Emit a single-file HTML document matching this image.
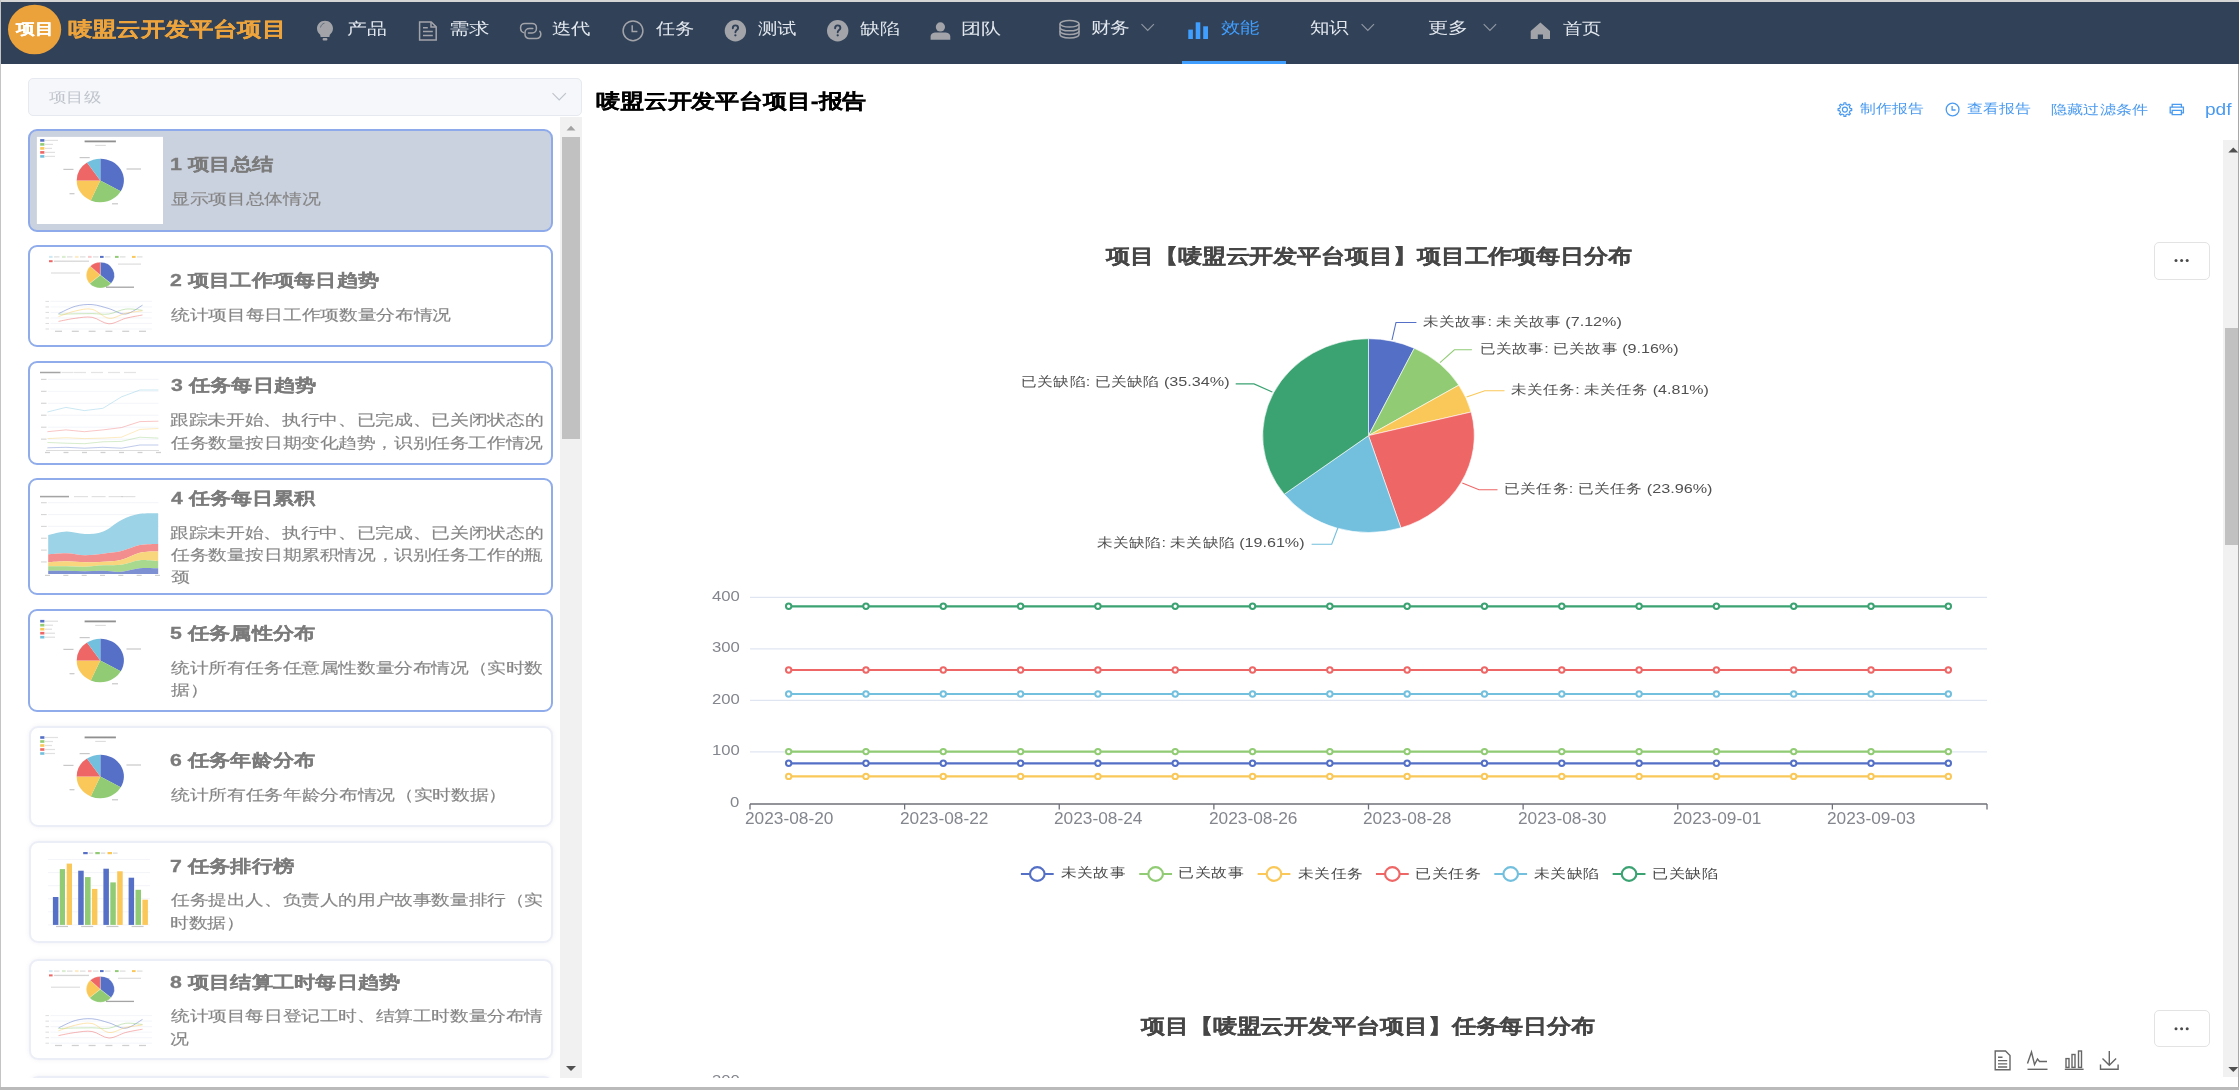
<!DOCTYPE html>
<html><head><meta charset="utf-8"><style>
html,body{margin:0;padding:0;}
body{width:2239px;height:1090px;overflow:hidden;position:relative;background:#fff;font-family:"Liberation Sans",sans-serif;}
.t{position:absolute;white-space:nowrap;transform-origin:0 0;font-size:100px;line-height:100px;}
svg.ov{position:absolute;left:0;top:0;z-index:2;}
</style></head><body>
<div style="position:absolute;left:0;top:0;width:2239px;height:2px;background:#d6d6d6"></div>
<div style="position:absolute;left:0;top:0;width:1px;height:1090px;background:#c4c4c4;z-index:6"></div>
<div style="position:absolute;left:2238px;top:63.5px;width:1px;height:1026px;background:#a8a8a8;z-index:6"></div>
<div style="position:absolute;left:0;top:1087px;width:2239px;height:3px;background:#bababa;z-index:6"></div>
<div style="position:absolute;left:1px;top:2px;width:2238px;height:61.5px;background:#314157"></div>
<div style="position:absolute;left:1182px;top:61px;width:103.5px;height:3px;background:#409eff"></div>
<div style="position:absolute;left:28px;top:77.5px;width:551.5px;height:36px;background:#f5f7fa;border:1px solid #e6e9ef;border-radius:5px"></div>
<div style="position:absolute;left:560px;top:117px;width:22px;height:961px;background:#f1f1f1"></div>
<div style="position:absolute;left:562px;top:136.8px;width:18px;height:302.5px;background:#c1c1c1"></div>
<div style="position:absolute;left:28px;top:128.6px;width:525px;height:103.1px;box-sizing:border-box;border:2.6px solid #8eaaea;border-radius:9px;background:#cbd2df"></div>
<div style="position:absolute;left:28px;top:244.8px;width:525px;height:102.69999999999999px;box-sizing:border-box;border:2.4px solid #90acea;border-radius:9px;background:#fff"></div>
<div style="position:absolute;left:28px;top:361.0px;width:525px;height:103.69999999999999px;box-sizing:border-box;border:2.4px solid #90acea;border-radius:9px;background:#fff"></div>
<div style="position:absolute;left:28px;top:478.4px;width:525px;height:117.0px;box-sizing:border-box;border:2.4px solid #90acea;border-radius:9px;background:#fff"></div>
<div style="position:absolute;left:28px;top:609.4px;width:525px;height:102.20000000000005px;box-sizing:border-box;border:2.4px solid #90acea;border-radius:9px;background:#fff"></div>
<div style="position:absolute;left:28.5px;top:725.7px;width:524.0px;height:101.5px;box-sizing:border-box;border:2px solid #eceef7;border-radius:9px;background:#fff;box-shadow:0 0 4px rgba(120,120,180,0.10)"></div>
<div style="position:absolute;left:28.5px;top:841.3px;width:524.0px;height:101.40000000000009px;box-sizing:border-box;border:2px solid #eceef7;border-radius:9px;background:#fff;box-shadow:0 0 4px rgba(120,120,180,0.10)"></div>
<div style="position:absolute;left:28.5px;top:959.0px;width:524.0px;height:101.0px;box-sizing:border-box;border:2px solid #eceef7;border-radius:9px;background:#fff;box-shadow:0 0 4px rgba(120,120,180,0.10)"></div>
<div style="position:absolute;left:28.5px;top:1075.5px;width:524.0px;height:104.5px;box-sizing:border-box;border:2px solid #eceef7;border-radius:9px;background:#fff;box-shadow:0 0 4px rgba(120,120,180,0.10)"></div>
<div style="position:absolute;left:1px;top:1078px;width:582px;height:9px;background:#fff;z-index:3"></div>
<div style="position:absolute;left:2223.4px;top:139.7px;width:14.6px;height:937.8px;background:#f1f1f1"></div>
<div style="position:absolute;left:2225.4px;top:328.3px;width:12.6px;height:217px;background:#c1c1c1"></div>
<div style="position:absolute;left:2153.5px;top:241.5px;width:56.19999999999982px;height:38.0px;box-sizing:border-box;border:1px solid #e3e3e3;border-radius:5px;background:#fff"></div>
<div style="position:absolute;left:2153.5px;top:1010.3px;width:56.19999999999982px;height:37.100000000000136px;box-sizing:border-box;border:1px solid #e3e3e3;border-radius:5px;background:#fff"></div>
<div style="position:absolute;left:600px;top:1078px;width:1620px;height:9px;background:#fff;z-index:3"></div>
<svg class="ov" width="2239" height="1090" viewBox="0 0 2239 1090">
<defs><filter id="bl" x="-5%" y="-5%" width="110%" height="110%"><feGaussianBlur stdDeviation="0.3"/></filter></defs>
<ellipse cx="34.6" cy="29.5" rx="26.6" ry="24.8" fill="#eca23b"/>
<g fill="#a2a4aa"><path d="M325 20.8 C320.4 20.8 317 24.3 317 28.6 C317 31.6 318.6 33.4 320.2 34.8 L320.6 37 L329.4 37 L329.8 34.8 C331.4 33.4 333 31.6 333 28.6 C333 24.3 329.6 20.8 325 20.8Z"/><rect x="322.6" y="38" width="4.8" height="2.6" rx="1"/></g>
<path d="M320.5 27.5 C321 25 322.5 23.6 324.5 23.2" stroke="#314157" stroke-width="0.9" fill="none" opacity="0.6"/>
<g fill="none" stroke="#a2a4aa" stroke-width="1.5"><path d="M419.6 21.9 H431.2 L436.2 26.9 V39.9 H419.6Z"/><path d="M431 22 V27 H436"/><path d="M423 27.8 H427.8 M423 31.6 H432.8 M423 35.4 H432.8"/></g>
<g fill="none" stroke="#a2a4aa" stroke-width="1.5" stroke-linecap="round"><path d="M523.6 32.6 A4.2 4.2 0 0 1 520.6 28.6 V27.6 A4.2 4.2 0 0 1 524.8 23.4 H532.2 A4.2 4.2 0 0 1 536.4 27.6 V28.8 A4.2 4.2 0 0 1 532.2 33 H528.4"/><path d="M539.8 31.2 A4.2 4.2 0 0 1 540.8 33.8 V34.4 A4.2 4.2 0 0 1 536.6 38.6 H529.2 A4.2 4.2 0 0 1 525 34.4 V32.7 A4.2 4.2 0 0 1 529.2 28.5 H532.8"/></g>
<g fill="none" stroke="#a2a4aa" stroke-width="1.5"><circle cx="633" cy="30.8" r="9.9"/><path d="M632.2 25.3 V31.6 H637.4"/></g>
<circle cx="735.4" cy="30.8" r="10.7" fill="#a2a4aa"/>
<path d="M732.8 28.2 C732.8 26.4 734.1 25.4 735.4 25.4 C737.0 25.4 738.1 26.5 738.1 27.9 C738.1 29.9 735.4 30.1 735.4 32.3" stroke="#314157" stroke-width="1.9" fill="none" stroke-linecap="round"/><circle cx="735.4" cy="35.3" r="1.15" fill="#314157"/>
<circle cx="837.7" cy="30.8" r="10.7" fill="#a2a4aa"/>
<path d="M835.1 28.2 C835.1 26.4 836.4000000000001 25.4 837.7 25.4 C839.3000000000001 25.4 840.4000000000001 26.5 840.4000000000001 27.9 C840.4000000000001 29.9 837.7 30.1 837.7 32.3" stroke="#314157" stroke-width="1.9" fill="none" stroke-linecap="round"/><circle cx="837.7" cy="35.3" r="1.15" fill="#314157"/>
<g fill="#a2a4aa"><circle cx="940.4" cy="26.9" r="4.6"/><path d="M930.6 39.7 V36.6 C930.6 33.6 933.2 32.4 936 32.4 H944.8 C947.6 32.4 950.3 33.6 950.3 36.6 V39.7Z"/></g>
<g fill="none" stroke="#a2a4aa" stroke-width="1.5"><ellipse cx="1069.5" cy="23.8" rx="9.5" ry="3.3"/><path d="M1060 23.8 V34.6 C1060 36.6 1064.2 38 1069.5 38 C1074.8 38 1079 36.6 1079 34.6 V23.8"/><path d="M1060 27.4 C1060 29.4 1064.2 30.8 1069.5 30.8 C1074.8 30.8 1079 29.4 1079 27.4"/><path d="M1060 31 C1060 33 1064.2 34.4 1069.5 34.4 C1074.8 34.4 1079 33 1079 31"/></g>
<path d="M1141.5 24.2 L1147.7 30.4 L1153.9 24.2" stroke="#8f96a3" stroke-width="1.2" fill="none"/>
<path d="M1361.6 24.2 L1367.8 30.4 L1374.0 24.2" stroke="#8f96a3" stroke-width="1.2" fill="none"/>
<path d="M1483.7 24.2 L1489.9 30.4 L1496.1000000000001 24.2" stroke="#8f96a3" stroke-width="1.2" fill="none"/>
<g fill="#409eff"><rect x="1188.3" y="29.6" width="4.6" height="9.4"/><rect x="1195.7" y="22.3" width="4.6" height="16.7"/><rect x="1203.2" y="26.3" width="4.8" height="12.7"/></g>
<path d="M1540.4 22.5 L1530.7 31 V39.1 H1537.8 V34.6 H1543 V39.1 H1550 V31Z" fill="#a2a4aa"/>
<path d="M552.5 93.2 L559.2 99.9 L565.9 93.2" stroke="#c0c4cc" stroke-width="1.2" fill="none"/>
<path d="M566.5 130.5 L571 125.8 L575.5 130.5Z" fill="#a3a3a3"/>
<path d="M566 1066 L571 1071 L576 1066Z" fill="#505050"/>
<g filter="url(#bl)"><rect x="36.9" y="136.90" width="126.1" height="87.1" fill="#fff"/><rect x="40.2" y="139.10" width="4.2" height="2.6" fill="#5470c6"/><rect x="45.00" y="139.80" width="13.00" height="1.2" fill="#777" opacity="0.22"/><rect x="40.2" y="143.10" width="4.2" height="2.6" fill="#91cc75"/><rect x="45.00" y="143.80" width="8.00" height="1.2" fill="#777" opacity="0.22"/><rect x="40.2" y="147.10" width="4.2" height="2.6" fill="#fac858"/><rect x="45.00" y="147.80" width="7.00" height="1.2" fill="#777" opacity="0.22"/><rect x="40.2" y="151.10" width="4.2" height="2.6" fill="#ee6666"/><rect x="45.00" y="151.80" width="10.00" height="1.2" fill="#777" opacity="0.22"/><rect x="40.2" y="155.10" width="4.2" height="2.6" fill="#73c0de"/><rect x="45.00" y="155.80" width="10.00" height="1.2" fill="#777" opacity="0.22"/><rect x="84.60" y="140.50" width="31.30" height="1.8" fill="#333" opacity="0.55"/><rect x="95.20" y="144.85" width="10.60" height="1.1" fill="#999" opacity="0.35"/><path d="M100.30 180.50 L100.30 158.70 A23.60 21.80 0 0 1 120.76 191.36Z" fill="#5470c6" stroke="#fff" stroke-width="0"/><path d="M100.30 180.50 L120.76 191.36 A23.60 21.80 0 0 1 90.71 200.42Z" fill="#91cc75" stroke="#fff" stroke-width="0"/><path d="M100.30 180.50 L90.71 200.42 A23.60 21.80 0 0 1 76.70 180.38Z" fill="#fac858" stroke="#fff" stroke-width="0"/><path d="M100.30 180.50 L76.70 180.38 A23.60 21.80 0 0 1 86.99 162.50Z" fill="#ee6666" stroke="#fff" stroke-width="0"/><path d="M100.30 180.50 L86.99 162.50 A23.60 21.80 0 0 1 100.30 158.70Z" fill="#73c0de" stroke="#fff" stroke-width="0"/><rect x="126.50" y="168.40" width="14.50" height="1.2" fill="#444" opacity="0.3"/><rect x="112.00" y="203.20" width="6.00" height="1.2" fill="#444" opacity="0.3"/><rect x="69.50" y="193.10" width="5.00" height="1.2" fill="#444" opacity="0.3"/><rect x="63.40" y="168.80" width="10.10" height="1.2" fill="#444" opacity="0.3"/><rect x="79.60" y="157.00" width="10.10" height="1.2" fill="#444" opacity="0.3"/></g>
<g filter="url(#bl)"><rect x="49" y="255.90" width="3.6" height="2" fill="#73c0de" opacity="0.35"/><rect x="54.00" y="256.30" width="5.50" height="1.2" fill="#777" opacity="0.25"/><rect x="62" y="255.90" width="3.6" height="2" fill="#91cc75" opacity="0.35"/><rect x="67.00" y="256.30" width="5.50" height="1.2" fill="#777" opacity="0.25"/><rect x="75" y="255.90" width="3.6" height="2" fill="#fac858" opacity="0.35"/><rect x="80.00" y="256.30" width="5.50" height="1.2" fill="#777" opacity="0.25"/><rect x="88" y="255.90" width="3.6" height="2" fill="#ee6666" opacity="0.35"/><rect x="93.00" y="256.30" width="5.50" height="1.2" fill="#777" opacity="0.25"/><rect x="100" y="255.90" width="3.6" height="2" fill="#5470c6" opacity="1"/><rect x="105.00" y="256.30" width="5.50" height="1.2" fill="#777" opacity="0.25"/><rect x="115" y="255.90" width="3.6" height="2" fill="#91cc75" opacity="1"/><rect x="120.00" y="256.30" width="5.50" height="1.2" fill="#777" opacity="0.25"/><rect x="132" y="255.90" width="3.6" height="2" fill="#fac858" opacity="1"/><rect x="137.00" y="256.30" width="5.50" height="1.2" fill="#777" opacity="0.25"/><rect x="49" y="260.20" width="3.6" height="2" fill="#ee6666"/><rect x="54.00" y="260.55" width="35.00" height="1.3" fill="#777" opacity="0.3"/><path d="M100.30 275.10 L100.30 262.20 A14.00 12.90 0 0 1 110.99 283.43Z" fill="#5470c6" stroke="#fff" stroke-width="0.2"/><path d="M100.30 275.10 L110.99 283.43 A14.00 12.90 0 0 1 89.61 283.43Z" fill="#91cc75" stroke="#fff" stroke-width="0.2"/><path d="M100.30 275.10 L89.61 283.43 A14.00 12.90 0 0 1 90.24 266.13Z" fill="#fac858" stroke="#fff" stroke-width="0.2"/><path d="M100.30 275.10 L90.24 266.13 A14.00 12.90 0 0 1 100.30 262.20Z" fill="#ee6666" stroke="#fff" stroke-width="0.2"/><rect x="118.00" y="263.50" width="23.00" height="1.2" fill="#777" opacity="0.25"/><rect x="51.00" y="272.40" width="29.00" height="1.2" fill="#777" opacity="0.25"/><rect x="106.00" y="286.55" width="28.00" height="1.3" fill="#333" opacity="0.45"/><rect x="45.50" y="300.90" width="3.50" height="1.0" fill="#777" opacity="0.25"/><rect x="45.50" y="306.42" width="3.50" height="1.0" fill="#777" opacity="0.25"/><rect x="45.50" y="311.94" width="3.50" height="1.0" fill="#777" opacity="0.25"/><rect x="45.50" y="317.46" width="3.50" height="1.0" fill="#777" opacity="0.25"/><rect x="45.50" y="322.98" width="3.50" height="1.0" fill="#777" opacity="0.25"/><rect x="45.50" y="328.50" width="3.50" height="1.0" fill="#777" opacity="0.25"/><line x1="50.5" x2="151.9" y1="301.40" y2="301.40" stroke="#e0e6f1" stroke-width="0.4"/><line x1="50.5" x2="151.9" y1="306.92" y2="306.92" stroke="#e0e6f1" stroke-width="0.4"/><line x1="50.5" x2="151.9" y1="312.44" y2="312.44" stroke="#e0e6f1" stroke-width="0.4"/><line x1="50.5" x2="151.9" y1="317.96" y2="317.96" stroke="#e0e6f1" stroke-width="0.4"/><line x1="50.5" x2="151.9" y1="323.48" y2="323.48" stroke="#e0e6f1" stroke-width="0.4"/><line x1="50.5" x2="151.9" y1="329.00" y2="329.00" stroke="#e0e6f1" stroke-width="0.4"/><path d="M58.50 313.70 C61.30 312.47 69.70 307.82 75.30 306.30 C80.90 304.78 86.50 304.22 92.10 304.60 C97.70 304.98 103.30 307.03 108.90 308.60 C114.50 310.17 120.10 314.57 125.70 314.00 C131.30 313.43 139.70 306.67 142.50 305.20" stroke="#5470c6" stroke-width="0.6" fill="none" opacity="0.8"/><path d="M58.50 314.30 C61.30 314.22 69.70 313.92 75.30 313.80 C80.90 313.68 86.50 313.57 92.10 313.60 C97.70 313.63 103.30 314.75 108.90 314.00 C114.50 313.25 120.10 309.72 125.70 309.10 C131.30 308.48 139.70 310.10 142.50 310.30" stroke="#91cc75" stroke-width="0.6" fill="none" opacity="0.8"/><path d="M58.50 316.60 C61.30 315.67 69.70 312.22 75.30 311.00 C80.90 309.78 86.50 308.08 92.10 309.30 C97.70 310.52 103.30 317.63 108.90 318.30 C114.50 318.97 120.10 314.55 125.70 313.30 C131.30 312.05 139.70 311.22 142.50 310.80" stroke="#fac858" stroke-width="0.6" fill="none" opacity="0.8"/><path d="M58.50 321.40 C61.30 320.88 69.70 318.98 75.30 318.30 C80.90 317.62 86.50 316.38 92.10 317.30 C97.70 318.22 103.30 323.63 108.90 323.80 C114.50 323.97 120.10 319.77 125.70 318.30 C131.30 316.83 139.70 315.55 142.50 315.00" stroke="#ee6666" stroke-width="0.6" fill="none" opacity="0.8"/><rect x="55.00" y="330.70" width="7.00" height="1.2" fill="#777" opacity="0.35"/><rect x="71.80" y="330.70" width="7.00" height="1.2" fill="#777" opacity="0.35"/><rect x="88.60" y="330.70" width="7.00" height="1.2" fill="#777" opacity="0.35"/><rect x="105.40" y="330.70" width="7.00" height="1.2" fill="#777" opacity="0.35"/><rect x="122.20" y="330.70" width="7.00" height="1.2" fill="#777" opacity="0.35"/><rect x="139.00" y="330.70" width="7.00" height="1.2" fill="#777" opacity="0.35"/></g>
<g filter="url(#bl)"><line x1="48" x2="158.5" y1="379.40" y2="379.40" stroke="#e0e6f1" stroke-width="0.4"/><line x1="48" x2="158.5" y1="391.35" y2="391.35" stroke="#e0e6f1" stroke-width="0.4"/><line x1="48" x2="158.5" y1="403.30" y2="403.30" stroke="#e0e6f1" stroke-width="0.4"/><line x1="48" x2="158.5" y1="415.25" y2="415.25" stroke="#e0e6f1" stroke-width="0.4"/><line x1="48" x2="158.5" y1="427.20" y2="427.20" stroke="#e0e6f1" stroke-width="0.4"/><line x1="48" x2="158.5" y1="439.15" y2="439.15" stroke="#e0e6f1" stroke-width="0.4"/><line x1="46" x2="159" y1="450.50" y2="450.50" stroke="#aaa" stroke-width="0.4"/><polyline points="47.40,412.00 65.90,407.40 84.40,410.60 102.90,408.30 121.40,396.90 139.90,390.00 158.40,390.00" stroke="#73c0de" stroke-width="0.5" fill="none" opacity="0.75"/><polyline points="47.40,431.70 65.90,429.90 84.40,431.70 102.90,429.90 121.40,427.60 139.90,421.60 158.40,421.20" stroke="#ee6666" stroke-width="0.5" fill="none" opacity="0.75"/><polyline points="47.40,438.60 65.90,437.70 84.40,438.60 102.90,438.10 121.40,437.20 139.90,429.40 158.40,428.50" stroke="#fac858" stroke-width="0.5" fill="none" opacity="0.75"/><polyline points="47.40,442.50 65.90,443.20 84.40,443.70 102.90,441.80 121.40,441.40 139.90,437.20 158.40,438.10" stroke="#91cc75" stroke-width="0.5" fill="none" opacity="0.75"/><polyline points="47.40,447.80 65.90,447.30 84.40,448.20 102.90,447.30 121.40,448.20 139.90,445.00 158.40,445.00" stroke="#5470c6" stroke-width="0.5" fill="none" opacity="0.75"/><rect x="40.00" y="371.75" width="20.50" height="1.5" fill="#333" opacity="0.45"/><rect x="61.50" y="371.90" width="12.00" height="1.2" fill="#777" opacity="0.2"/><rect x="74.00" y="371.90" width="12.00" height="1.2" fill="#777" opacity="0.2"/><rect x="91.00" y="371.90" width="12.00" height="1.2" fill="#777" opacity="0.2"/><rect x="108.00" y="371.90" width="12.00" height="1.2" fill="#777" opacity="0.2"/><rect x="124.00" y="371.90" width="12.00" height="1.2" fill="#777" opacity="0.2"/><rect x="45.00" y="451.90" width="5.00" height="1.2" fill="#777" opacity="0.35"/><rect x="63.50" y="451.90" width="5.00" height="1.2" fill="#777" opacity="0.35"/><rect x="82.00" y="451.90" width="5.00" height="1.2" fill="#777" opacity="0.35"/><rect x="100.50" y="451.90" width="5.00" height="1.2" fill="#777" opacity="0.35"/><rect x="119.00" y="451.90" width="5.00" height="1.2" fill="#777" opacity="0.35"/><rect x="137.50" y="451.90" width="5.00" height="1.2" fill="#777" opacity="0.35"/><rect x="156.00" y="451.90" width="5.00" height="1.2" fill="#777" opacity="0.35"/><rect x="41.00" y="378.80" width="5.50" height="1.2" fill="#777" opacity="0.3"/><rect x="41.00" y="390.75" width="5.50" height="1.2" fill="#777" opacity="0.3"/><rect x="41.00" y="402.70" width="5.50" height="1.2" fill="#777" opacity="0.3"/><rect x="41.00" y="414.65" width="5.50" height="1.2" fill="#777" opacity="0.3"/><rect x="41.00" y="426.60" width="5.50" height="1.2" fill="#777" opacity="0.3"/><rect x="41.00" y="438.55" width="5.50" height="1.2" fill="#777" opacity="0.3"/></g>
<g filter="url(#bl)"><line x1="48" x2="158.5" y1="502.70" y2="502.70" stroke="#e0e6f1" stroke-width="0.4"/><rect x="41.00" y="502.15" width="5.70" height="1.1" fill="#777" opacity="0.3"/><line x1="48" x2="158.5" y1="514.55" y2="514.55" stroke="#e0e6f1" stroke-width="0.4"/><rect x="41.00" y="514.00" width="5.70" height="1.1" fill="#777" opacity="0.3"/><line x1="48" x2="158.5" y1="526.40" y2="526.40" stroke="#e0e6f1" stroke-width="0.4"/><rect x="41.00" y="525.85" width="5.70" height="1.1" fill="#777" opacity="0.3"/><line x1="48" x2="158.5" y1="538.25" y2="538.25" stroke="#e0e6f1" stroke-width="0.4"/><rect x="41.00" y="537.70" width="5.70" height="1.1" fill="#777" opacity="0.3"/><line x1="48" x2="158.5" y1="550.10" y2="550.10" stroke="#e0e6f1" stroke-width="0.4"/><rect x="41.00" y="549.55" width="5.70" height="1.1" fill="#777" opacity="0.3"/><line x1="48" x2="158.5" y1="561.95" y2="561.95" stroke="#e0e6f1" stroke-width="0.4"/><rect x="41.00" y="561.40" width="5.70" height="1.1" fill="#777" opacity="0.3"/><path d="M48.20 535.00 C51.26 534.42 60.42 531.67 66.53 531.50 C72.64 531.33 78.75 534.00 84.86 534.00 C90.97 534.00 97.08 533.85 103.19 531.50 C109.30 529.15 115.41 522.85 121.52 519.90 C127.63 516.95 133.74 514.90 139.85 513.80 C145.96 512.70 155.12 513.38 158.18 513.30 L158.18 544.10 C155.12 544.27 145.96 543.93 139.85 545.10 C133.74 546.27 127.63 549.67 121.52 551.10 C115.41 552.53 109.30 553.02 103.19 553.70 C97.08 554.38 90.97 555.28 84.86 555.20 C78.75 555.12 72.64 553.37 66.53 553.20 C60.42 553.03 51.26 554.03 48.20 554.20Z" fill="#9dd3e6"/><path d="M48.20 554.20 C51.26 554.03 60.42 553.03 66.53 553.20 C72.64 553.37 78.75 555.12 84.86 555.20 C90.97 555.28 97.08 554.38 103.19 553.70 C109.30 553.02 115.41 552.53 121.52 551.10 C127.63 549.67 133.74 546.27 139.85 545.10 C145.96 543.93 155.12 544.27 158.18 544.10 L158.18 551.60 C155.12 551.78 145.96 551.35 139.85 552.70 C133.74 554.05 127.63 558.20 121.52 559.70 C115.41 561.20 109.30 561.28 103.19 561.70 C97.08 562.12 90.97 562.28 84.86 562.20 C78.75 562.12 72.64 561.20 66.53 561.20 C60.42 561.20 51.26 562.03 48.20 562.20Z" fill="#f28e8e"/><path d="M48.20 562.20 C51.26 562.03 60.42 561.20 66.53 561.20 C72.64 561.20 78.75 562.12 84.86 562.20 C90.97 562.28 97.08 562.12 103.19 561.70 C109.30 561.28 115.41 561.20 121.52 559.70 C127.63 558.20 133.74 554.05 139.85 552.70 C145.96 551.35 155.12 551.78 158.18 551.60 L158.18 561.20 C155.12 561.03 145.96 559.60 139.85 560.20 C133.74 560.80 127.63 563.95 121.52 564.80 C115.41 565.65 109.30 564.97 103.19 565.30 C97.08 565.63 90.97 566.63 84.86 566.80 C78.75 566.97 72.64 566.38 66.53 566.30 C60.42 566.22 51.26 566.30 48.20 566.30Z" fill="#f8d67e"/><path d="M48.20 566.30 C51.26 566.30 60.42 566.22 66.53 566.30 C72.64 566.38 78.75 566.97 84.86 566.80 C90.97 566.63 97.08 565.63 103.19 565.30 C109.30 564.97 115.41 565.65 121.52 564.80 C127.63 563.95 133.74 560.80 139.85 560.20 C145.96 559.60 155.12 561.03 158.18 561.20 L158.18 568.30 C155.12 568.30 145.96 567.72 139.85 568.30 C133.74 568.88 127.63 571.38 121.52 571.80 C115.41 572.22 109.30 570.88 103.19 570.80 C97.08 570.72 90.97 571.30 84.86 571.30 C78.75 571.30 72.64 570.88 66.53 570.80 C60.42 570.72 51.26 570.80 48.20 570.80Z" fill="#a8d98f"/><path d="M48.20 570.80 C51.26 570.80 60.42 570.72 66.53 570.80 C72.64 570.88 78.75 571.30 84.86 571.30 C90.97 571.30 97.08 570.72 103.19 570.80 C109.30 570.88 115.41 572.22 121.52 571.80 C127.63 571.38 133.74 568.88 139.85 568.30 C145.96 567.72 155.12 568.30 158.18 568.30 L158.18 573.90 C155.12 573.90 145.96 573.90 139.85 573.90 C133.74 573.90 127.63 573.90 121.52 573.90 C115.41 573.90 109.30 573.90 103.19 573.90 C97.08 573.90 90.97 573.90 84.86 573.90 C78.75 573.90 72.64 573.90 66.53 573.90 C60.42 573.90 51.26 573.90 48.20 573.90Z" fill="#7b90d2"/><rect x="40.00" y="495.85" width="29.00" height="1.5" fill="#333" opacity="0.45"/><rect x="74.00" y="496.00" width="14.00" height="1.2" fill="#777" opacity="0.22"/><rect x="91.60" y="496.00" width="14.00" height="1.2" fill="#777" opacity="0.22"/><rect x="108.70" y="496.00" width="14.00" height="1.2" fill="#777" opacity="0.22"/><rect x="121.40" y="496.00" width="14.00" height="1.2" fill="#777" opacity="0.22"/><rect x="45.00" y="574.80" width="5.00" height="1.2" fill="#777" opacity="0.35"/><rect x="63.33" y="574.80" width="5.00" height="1.2" fill="#777" opacity="0.35"/><rect x="81.66" y="574.80" width="5.00" height="1.2" fill="#777" opacity="0.35"/><rect x="99.99" y="574.80" width="5.00" height="1.2" fill="#777" opacity="0.35"/><rect x="118.32" y="574.80" width="5.00" height="1.2" fill="#777" opacity="0.35"/><rect x="136.65" y="574.80" width="5.00" height="1.2" fill="#777" opacity="0.35"/><rect x="154.98" y="574.80" width="5.00" height="1.2" fill="#777" opacity="0.35"/></g>
<g filter="url(#bl)"><rect x="40.2" y="619.90" width="4.2" height="2.6" fill="#5470c6"/><rect x="45.00" y="620.60" width="13.00" height="1.2" fill="#777" opacity="0.22"/><rect x="40.2" y="623.90" width="4.2" height="2.6" fill="#91cc75"/><rect x="45.00" y="624.60" width="8.00" height="1.2" fill="#777" opacity="0.22"/><rect x="40.2" y="627.90" width="4.2" height="2.6" fill="#fac858"/><rect x="45.00" y="628.60" width="7.00" height="1.2" fill="#777" opacity="0.22"/><rect x="40.2" y="631.90" width="4.2" height="2.6" fill="#ee6666"/><rect x="45.00" y="632.60" width="10.00" height="1.2" fill="#777" opacity="0.22"/><rect x="40.2" y="635.90" width="4.2" height="2.6" fill="#73c0de"/><rect x="45.00" y="636.60" width="10.00" height="1.2" fill="#777" opacity="0.22"/><rect x="84.60" y="620.50" width="31.30" height="1.8" fill="#333" opacity="0.55"/><rect x="95.20" y="624.85" width="10.60" height="1.1" fill="#999" opacity="0.35"/><path d="M100.30 660.50 L100.30 638.70 A23.60 21.80 0 0 1 120.76 671.36Z" fill="#5470c6" stroke="#fff" stroke-width="0"/><path d="M100.30 660.50 L120.76 671.36 A23.60 21.80 0 0 1 90.71 680.42Z" fill="#91cc75" stroke="#fff" stroke-width="0"/><path d="M100.30 660.50 L90.71 680.42 A23.60 21.80 0 0 1 76.70 660.38Z" fill="#fac858" stroke="#fff" stroke-width="0"/><path d="M100.30 660.50 L76.70 660.38 A23.60 21.80 0 0 1 86.99 642.50Z" fill="#ee6666" stroke="#fff" stroke-width="0"/><path d="M100.30 660.50 L86.99 642.50 A23.60 21.80 0 0 1 100.30 638.70Z" fill="#73c0de" stroke="#fff" stroke-width="0"/><rect x="126.50" y="648.40" width="14.50" height="1.2" fill="#444" opacity="0.3"/><rect x="112.00" y="683.20" width="6.00" height="1.2" fill="#444" opacity="0.3"/><rect x="69.50" y="673.10" width="5.00" height="1.2" fill="#444" opacity="0.3"/><rect x="63.40" y="648.80" width="10.10" height="1.2" fill="#444" opacity="0.3"/><rect x="79.60" y="637.00" width="10.10" height="1.2" fill="#444" opacity="0.3"/></g>
<g filter="url(#bl)"><rect x="40.2" y="736.20" width="4.2" height="2.6" fill="#5470c6"/><rect x="45.00" y="736.90" width="13.00" height="1.2" fill="#777" opacity="0.22"/><rect x="40.2" y="740.20" width="4.2" height="2.6" fill="#91cc75"/><rect x="45.00" y="740.90" width="8.00" height="1.2" fill="#777" opacity="0.22"/><rect x="40.2" y="744.20" width="4.2" height="2.6" fill="#fac858"/><rect x="45.00" y="744.90" width="7.00" height="1.2" fill="#777" opacity="0.22"/><rect x="40.2" y="748.20" width="4.2" height="2.6" fill="#ee6666"/><rect x="45.00" y="748.90" width="10.00" height="1.2" fill="#777" opacity="0.22"/><rect x="40.2" y="752.20" width="4.2" height="2.6" fill="#73c0de"/><rect x="45.00" y="752.90" width="10.00" height="1.2" fill="#777" opacity="0.22"/><rect x="84.60" y="736.50" width="31.30" height="1.8" fill="#333" opacity="0.55"/><rect x="95.20" y="740.85" width="10.60" height="1.1" fill="#999" opacity="0.35"/><path d="M100.30 776.50 L100.30 754.70 A23.60 21.80 0 0 1 120.76 787.36Z" fill="#5470c6" stroke="#fff" stroke-width="0"/><path d="M100.30 776.50 L120.76 787.36 A23.60 21.80 0 0 1 90.71 796.42Z" fill="#91cc75" stroke="#fff" stroke-width="0"/><path d="M100.30 776.50 L90.71 796.42 A23.60 21.80 0 0 1 76.70 776.38Z" fill="#fac858" stroke="#fff" stroke-width="0"/><path d="M100.30 776.50 L76.70 776.38 A23.60 21.80 0 0 1 86.99 758.50Z" fill="#ee6666" stroke="#fff" stroke-width="0"/><path d="M100.30 776.50 L86.99 758.50 A23.60 21.80 0 0 1 100.30 754.70Z" fill="#73c0de" stroke="#fff" stroke-width="0"/><rect x="126.50" y="764.40" width="14.50" height="1.2" fill="#444" opacity="0.3"/><rect x="112.00" y="799.20" width="6.00" height="1.2" fill="#444" opacity="0.3"/><rect x="69.50" y="789.10" width="5.00" height="1.2" fill="#444" opacity="0.3"/><rect x="63.40" y="764.80" width="10.10" height="1.2" fill="#444" opacity="0.3"/><rect x="79.60" y="753.00" width="10.10" height="1.2" fill="#444" opacity="0.3"/></g>
<g filter="url(#bl)"><line x1="48" x2="150" y1="859.50" y2="859.50" stroke="#e0e6f1" stroke-width="0.4"/><line x1="48" x2="150" y1="872.58" y2="872.58" stroke="#e0e6f1" stroke-width="0.4"/><line x1="48" x2="150" y1="885.66" y2="885.66" stroke="#e0e6f1" stroke-width="0.4"/><line x1="48" x2="150" y1="898.74" y2="898.74" stroke="#e0e6f1" stroke-width="0.4"/><line x1="48" x2="150" y1="911.82" y2="911.82" stroke="#e0e6f1" stroke-width="0.4"/><line x1="48" x2="150" y1="924.90" y2="924.90" stroke="#e0e6f1" stroke-width="0.4"/><rect x="52.9" y="897.00" width="5.50" height="27.90" fill="#5470c6"/><rect x="59.8" y="869.10" width="5.20" height="55.80" fill="#91cc75"/><rect x="66.7" y="863.60" width="5.30" height="61.30" fill="#fac858"/><rect x="78.2" y="870.70" width="5.50" height="54.20" fill="#5470c6"/><rect x="85" y="877.10" width="5.60" height="47.80" fill="#91cc75"/><rect x="91.9" y="888.90" width="5.50" height="36.00" fill="#fac858"/><rect x="103.4" y="868.70" width="5.50" height="56.20" fill="#5470c6"/><rect x="110.3" y="882.40" width="5.50" height="42.50" fill="#91cc75"/><rect x="117.2" y="871.30" width="5.50" height="53.60" fill="#fac858"/><rect x="128.6" y="877.70" width="5.50" height="47.20" fill="#5470c6"/><rect x="135.5" y="889.80" width="5.50" height="35.10" fill="#91cc75"/><rect x="142.4" y="899.70" width="5.50" height="25.20" fill="#fac858"/><rect x="83.2" y="852.00" width="4.5" height="2.2" fill="#5470c6"/><rect x="88.70" y="852.50" width="4.50" height="1.2" fill="#777" opacity="0.3"/><rect x="95.3" y="852.00" width="4.5" height="2.2" fill="#91cc75"/><rect x="100.80" y="852.50" width="4.50" height="1.2" fill="#777" opacity="0.3"/><rect x="107.5" y="852.00" width="4.5" height="2.2" fill="#fac858"/><rect x="113.00" y="852.50" width="4.50" height="1.2" fill="#777" opacity="0.3"/><rect x="56.00" y="925.90" width="12.00" height="1.2" fill="#777" opacity="0.4"/><rect x="81.20" y="925.90" width="12.00" height="1.2" fill="#777" opacity="0.4"/><rect x="106.40" y="925.90" width="12.00" height="1.2" fill="#777" opacity="0.4"/><rect x="131.60" y="925.90" width="12.00" height="1.2" fill="#777" opacity="0.4"/></g>
<g filter="url(#bl)"><rect x="49" y="970.10" width="3.6" height="2" fill="#73c0de" opacity="0.35"/><rect x="54.00" y="970.50" width="5.50" height="1.2" fill="#777" opacity="0.25"/><rect x="62" y="970.10" width="3.6" height="2" fill="#91cc75" opacity="0.35"/><rect x="67.00" y="970.50" width="5.50" height="1.2" fill="#777" opacity="0.25"/><rect x="75" y="970.10" width="3.6" height="2" fill="#fac858" opacity="0.35"/><rect x="80.00" y="970.50" width="5.50" height="1.2" fill="#777" opacity="0.25"/><rect x="88" y="970.10" width="3.6" height="2" fill="#ee6666" opacity="0.35"/><rect x="93.00" y="970.50" width="5.50" height="1.2" fill="#777" opacity="0.25"/><rect x="100" y="970.10" width="3.6" height="2" fill="#5470c6" opacity="1"/><rect x="105.00" y="970.50" width="5.50" height="1.2" fill="#777" opacity="0.25"/><rect x="115" y="970.10" width="3.6" height="2" fill="#91cc75" opacity="1"/><rect x="120.00" y="970.50" width="5.50" height="1.2" fill="#777" opacity="0.25"/><rect x="132" y="970.10" width="3.6" height="2" fill="#fac858" opacity="1"/><rect x="137.00" y="970.50" width="5.50" height="1.2" fill="#777" opacity="0.25"/><rect x="49" y="974.40" width="3.6" height="2" fill="#ee6666"/><rect x="54.00" y="974.75" width="35.00" height="1.3" fill="#777" opacity="0.3"/><path d="M100.30 989.30 L100.30 976.40 A14.00 12.90 0 0 1 110.99 997.63Z" fill="#5470c6" stroke="#fff" stroke-width="0.2"/><path d="M100.30 989.30 L110.99 997.63 A14.00 12.90 0 0 1 89.61 997.63Z" fill="#91cc75" stroke="#fff" stroke-width="0.2"/><path d="M100.30 989.30 L89.61 997.63 A14.00 12.90 0 0 1 90.24 980.33Z" fill="#fac858" stroke="#fff" stroke-width="0.2"/><path d="M100.30 989.30 L90.24 980.33 A14.00 12.90 0 0 1 100.30 976.40Z" fill="#ee6666" stroke="#fff" stroke-width="0.2"/><rect x="118.00" y="977.70" width="23.00" height="1.2" fill="#777" opacity="0.25"/><rect x="51.00" y="986.60" width="29.00" height="1.2" fill="#777" opacity="0.25"/><rect x="106.00" y="1000.75" width="28.00" height="1.3" fill="#333" opacity="0.45"/><rect x="45.50" y="1015.10" width="3.50" height="1.0" fill="#777" opacity="0.25"/><rect x="45.50" y="1020.62" width="3.50" height="1.0" fill="#777" opacity="0.25"/><rect x="45.50" y="1026.14" width="3.50" height="1.0" fill="#777" opacity="0.25"/><rect x="45.50" y="1031.66" width="3.50" height="1.0" fill="#777" opacity="0.25"/><rect x="45.50" y="1037.18" width="3.50" height="1.0" fill="#777" opacity="0.25"/><rect x="45.50" y="1042.70" width="3.50" height="1.0" fill="#777" opacity="0.25"/><line x1="50.5" x2="151.9" y1="1015.60" y2="1015.60" stroke="#e0e6f1" stroke-width="0.4"/><line x1="50.5" x2="151.9" y1="1021.12" y2="1021.12" stroke="#e0e6f1" stroke-width="0.4"/><line x1="50.5" x2="151.9" y1="1026.64" y2="1026.64" stroke="#e0e6f1" stroke-width="0.4"/><line x1="50.5" x2="151.9" y1="1032.16" y2="1032.16" stroke="#e0e6f1" stroke-width="0.4"/><line x1="50.5" x2="151.9" y1="1037.68" y2="1037.68" stroke="#e0e6f1" stroke-width="0.4"/><line x1="50.5" x2="151.9" y1="1043.20" y2="1043.20" stroke="#e0e6f1" stroke-width="0.4"/><path d="M58.50 1027.90 C61.30 1026.67 69.70 1022.02 75.30 1020.50 C80.90 1018.98 86.50 1018.42 92.10 1018.80 C97.70 1019.18 103.30 1021.23 108.90 1022.80 C114.50 1024.37 120.10 1028.77 125.70 1028.20 C131.30 1027.63 139.70 1020.87 142.50 1019.40" stroke="#5470c6" stroke-width="0.6" fill="none" opacity="0.8"/><path d="M58.50 1028.50 C61.30 1028.42 69.70 1028.12 75.30 1028.00 C80.90 1027.88 86.50 1027.77 92.10 1027.80 C97.70 1027.83 103.30 1028.95 108.90 1028.20 C114.50 1027.45 120.10 1023.92 125.70 1023.30 C131.30 1022.68 139.70 1024.30 142.50 1024.50" stroke="#91cc75" stroke-width="0.6" fill="none" opacity="0.8"/><path d="M58.50 1030.80 C61.30 1029.87 69.70 1026.42 75.30 1025.20 C80.90 1023.98 86.50 1022.28 92.10 1023.50 C97.70 1024.72 103.30 1031.83 108.90 1032.50 C114.50 1033.17 120.10 1028.75 125.70 1027.50 C131.30 1026.25 139.70 1025.42 142.50 1025.00" stroke="#fac858" stroke-width="0.6" fill="none" opacity="0.8"/><path d="M58.50 1035.60 C61.30 1035.08 69.70 1033.18 75.30 1032.50 C80.90 1031.82 86.50 1030.58 92.10 1031.50 C97.70 1032.42 103.30 1037.83 108.90 1038.00 C114.50 1038.17 120.10 1033.97 125.70 1032.50 C131.30 1031.03 139.70 1029.75 142.50 1029.20" stroke="#ee6666" stroke-width="0.6" fill="none" opacity="0.8"/><rect x="55.00" y="1044.90" width="7.00" height="1.2" fill="#777" opacity="0.35"/><rect x="71.80" y="1044.90" width="7.00" height="1.2" fill="#777" opacity="0.35"/><rect x="88.60" y="1044.90" width="7.00" height="1.2" fill="#777" opacity="0.35"/><rect x="105.40" y="1044.90" width="7.00" height="1.2" fill="#777" opacity="0.35"/><rect x="122.20" y="1044.90" width="7.00" height="1.2" fill="#777" opacity="0.35"/><rect x="139.00" y="1044.90" width="7.00" height="1.2" fill="#777" opacity="0.35"/></g>
<g fill="none" stroke="#4a9af0" stroke-width="1.2" stroke-linejoin="round"><path d="M1843.89 104.40 L1843.94 102.77 L1845.86 102.77 L1845.91 104.40 L1847.86 105.21 L1849.05 104.09 L1850.41 105.45 L1849.29 106.64 L1850.10 108.59 L1851.73 108.64 L1851.73 110.56 L1850.10 110.61 L1849.29 112.56 L1850.41 113.75 L1849.05 115.11 L1847.86 113.99 L1845.91 114.80 L1845.86 116.43 L1843.94 116.43 L1843.89 114.80 L1841.94 113.99 L1840.75 115.11 L1839.39 113.75 L1840.51 112.56 L1839.70 110.61 L1838.07 110.56 L1838.07 108.64 L1839.70 108.59 L1840.51 106.64 L1839.39 105.45 L1840.75 104.09 L1841.94 105.21Z"/><circle cx="1844.9" cy="109.6" r="2.5"/></g>
<g fill="none" stroke="#4a9af0" stroke-width="1.3"><circle cx="1952.6" cy="109.5" r="6.4"/><path d="M1952.1 105.9 V110 H1955.6"/></g>
<g fill="none" stroke="#4a9af0" stroke-width="1.3"><path d="M2172.2 107.2 V104.4 H2181.4 V107.2"/><path d="M2172.2 112.8 H2170.2 V107.2 H2183.4 V112.8 H2181.4"/><path d="M2172.2 110.4 H2181.4 V114.6 H2172.2Z"/></g>
<path d="M2228.3 152.4 L2233.3 147.4 L2238.3 152.4Z" fill="#505050"/>
<path d="M2228.3 1067 L2233.3 1072 L2238.3 1067Z" fill="#505050"/>
<circle cx="2176.0" cy="260.50" r="1.5" fill="#4a4a4a"/>
<circle cx="2181.6" cy="260.50" r="1.5" fill="#4a4a4a"/>
<circle cx="2187.2" cy="260.50" r="1.5" fill="#4a4a4a"/>
<circle cx="2176.0" cy="1028.85" r="1.5" fill="#4a4a4a"/>
<circle cx="2181.6" cy="1028.85" r="1.5" fill="#4a4a4a"/>
<circle cx="2187.2" cy="1028.85" r="1.5" fill="#4a4a4a"/>
<path d="M1368.50 435.60 L1368.50 338.70 A105.80 96.90 0 0 1 1414.27 348.24Z" fill="#5470c6" stroke="#fff" stroke-width="0.6"/><path d="M1368.50 435.60 L1414.27 348.24 A105.80 96.90 0 0 1 1458.81 385.13Z" fill="#91cc75" stroke="#fff" stroke-width="0.6"/><path d="M1368.50 435.60 L1458.81 385.13 A105.80 96.90 0 0 1 1471.12 412.03Z" fill="#fac858" stroke="#fff" stroke-width="0.6"/><path d="M1368.50 435.60 L1471.12 412.03 A105.80 96.90 0 0 1 1400.88 527.85Z" fill="#ee6666" stroke="#fff" stroke-width="0.6"/><path d="M1368.50 435.60 L1400.88 527.85 A105.80 96.90 0 0 1 1284.25 494.22Z" fill="#73c0de" stroke="#fff" stroke-width="0.6"/><path d="M1368.50 435.60 L1284.25 494.22 A105.80 96.90 0 0 1 1368.50 338.70Z" fill="#3ba272" stroke="#fff" stroke-width="0.6"/>
<polyline points="1392,340 1396,322.5 1416.4,322.5" stroke="#5470c6" stroke-width="1.1" fill="none"/>
<polyline points="1440,362.7 1454.4,349.8 1471.9,349.8" stroke="#91cc75" stroke-width="1.1" fill="none"/>
<polyline points="1466.6,396.9 1484.8,390.8 1504.5,390.8" stroke="#fac858" stroke-width="1.1" fill="none"/>
<polyline points="1462.3,483 1479,489.7 1497.5,489.7" stroke="#ee6666" stroke-width="1.1" fill="none"/>
<polyline points="1338.4,526.5 1331.7,544.3 1311.6,544.3" stroke="#73c0de" stroke-width="1.1" fill="none"/>
<polyline points="1272.4,392.1 1254,383.9 1235.7,383.9" stroke="#3ba272" stroke-width="1.1" fill="none"/>
<line x1="750.0" x2="1987.0" y1="597.4" y2="597.4" stroke="#e0e6f1" stroke-width="1.2"/>
<line x1="750.0" x2="1987.0" y1="648.9" y2="648.9" stroke="#e0e6f1" stroke-width="1.2"/>
<line x1="750.0" x2="1987.0" y1="700.4" y2="700.4" stroke="#e0e6f1" stroke-width="1.2"/>
<line x1="750.0" x2="1987.0" y1="751.9" y2="751.9" stroke="#e0e6f1" stroke-width="1.2"/>
<line x1="750.0" x2="1987.0" y1="804" y2="804" stroke="#6e7079" stroke-width="1.4"/>
<line x1="750.00" x2="750.00" y1="804" y2="809.5" stroke="#6e7079" stroke-width="1.3"/>
<line x1="904.62" x2="904.62" y1="804" y2="809.5" stroke="#6e7079" stroke-width="1.3"/>
<line x1="1059.25" x2="1059.25" y1="804" y2="809.5" stroke="#6e7079" stroke-width="1.3"/>
<line x1="1213.88" x2="1213.88" y1="804" y2="809.5" stroke="#6e7079" stroke-width="1.3"/>
<line x1="1368.50" x2="1368.50" y1="804" y2="809.5" stroke="#6e7079" stroke-width="1.3"/>
<line x1="1523.12" x2="1523.12" y1="804" y2="809.5" stroke="#6e7079" stroke-width="1.3"/>
<line x1="1677.75" x2="1677.75" y1="804" y2="809.5" stroke="#6e7079" stroke-width="1.3"/>
<line x1="1832.38" x2="1832.38" y1="804" y2="809.5" stroke="#6e7079" stroke-width="1.3"/>
<line x1="1987.00" x2="1987.00" y1="804" y2="809.5" stroke="#6e7079" stroke-width="1.3"/>
<line x1="788.66" x2="1948.34" y1="763.3" y2="763.3" stroke="#5470c6" stroke-width="2.2"/>
<circle cx="788.66" cy="763.3" r="2.7" fill="#fff" stroke="#5470c6" stroke-width="2.0"/>
<circle cx="865.97" cy="763.3" r="2.7" fill="#fff" stroke="#5470c6" stroke-width="2.0"/>
<circle cx="943.28" cy="763.3" r="2.7" fill="#fff" stroke="#5470c6" stroke-width="2.0"/>
<circle cx="1020.59" cy="763.3" r="2.7" fill="#fff" stroke="#5470c6" stroke-width="2.0"/>
<circle cx="1097.91" cy="763.3" r="2.7" fill="#fff" stroke="#5470c6" stroke-width="2.0"/>
<circle cx="1175.22" cy="763.3" r="2.7" fill="#fff" stroke="#5470c6" stroke-width="2.0"/>
<circle cx="1252.53" cy="763.3" r="2.7" fill="#fff" stroke="#5470c6" stroke-width="2.0"/>
<circle cx="1329.84" cy="763.3" r="2.7" fill="#fff" stroke="#5470c6" stroke-width="2.0"/>
<circle cx="1407.16" cy="763.3" r="2.7" fill="#fff" stroke="#5470c6" stroke-width="2.0"/>
<circle cx="1484.47" cy="763.3" r="2.7" fill="#fff" stroke="#5470c6" stroke-width="2.0"/>
<circle cx="1561.78" cy="763.3" r="2.7" fill="#fff" stroke="#5470c6" stroke-width="2.0"/>
<circle cx="1639.09" cy="763.3" r="2.7" fill="#fff" stroke="#5470c6" stroke-width="2.0"/>
<circle cx="1716.41" cy="763.3" r="2.7" fill="#fff" stroke="#5470c6" stroke-width="2.0"/>
<circle cx="1793.72" cy="763.3" r="2.7" fill="#fff" stroke="#5470c6" stroke-width="2.0"/>
<circle cx="1871.03" cy="763.3" r="2.7" fill="#fff" stroke="#5470c6" stroke-width="2.0"/>
<circle cx="1948.34" cy="763.3" r="2.7" fill="#fff" stroke="#5470c6" stroke-width="2.0"/>
<line x1="788.66" x2="1948.34" y1="751.6" y2="751.6" stroke="#91cc75" stroke-width="2.2"/>
<circle cx="788.66" cy="751.6" r="2.7" fill="#fff" stroke="#91cc75" stroke-width="2.0"/>
<circle cx="865.97" cy="751.6" r="2.7" fill="#fff" stroke="#91cc75" stroke-width="2.0"/>
<circle cx="943.28" cy="751.6" r="2.7" fill="#fff" stroke="#91cc75" stroke-width="2.0"/>
<circle cx="1020.59" cy="751.6" r="2.7" fill="#fff" stroke="#91cc75" stroke-width="2.0"/>
<circle cx="1097.91" cy="751.6" r="2.7" fill="#fff" stroke="#91cc75" stroke-width="2.0"/>
<circle cx="1175.22" cy="751.6" r="2.7" fill="#fff" stroke="#91cc75" stroke-width="2.0"/>
<circle cx="1252.53" cy="751.6" r="2.7" fill="#fff" stroke="#91cc75" stroke-width="2.0"/>
<circle cx="1329.84" cy="751.6" r="2.7" fill="#fff" stroke="#91cc75" stroke-width="2.0"/>
<circle cx="1407.16" cy="751.6" r="2.7" fill="#fff" stroke="#91cc75" stroke-width="2.0"/>
<circle cx="1484.47" cy="751.6" r="2.7" fill="#fff" stroke="#91cc75" stroke-width="2.0"/>
<circle cx="1561.78" cy="751.6" r="2.7" fill="#fff" stroke="#91cc75" stroke-width="2.0"/>
<circle cx="1639.09" cy="751.6" r="2.7" fill="#fff" stroke="#91cc75" stroke-width="2.0"/>
<circle cx="1716.41" cy="751.6" r="2.7" fill="#fff" stroke="#91cc75" stroke-width="2.0"/>
<circle cx="1793.72" cy="751.6" r="2.7" fill="#fff" stroke="#91cc75" stroke-width="2.0"/>
<circle cx="1871.03" cy="751.6" r="2.7" fill="#fff" stroke="#91cc75" stroke-width="2.0"/>
<circle cx="1948.34" cy="751.6" r="2.7" fill="#fff" stroke="#91cc75" stroke-width="2.0"/>
<line x1="788.66" x2="1948.34" y1="776.4" y2="776.4" stroke="#fac858" stroke-width="2.2"/>
<circle cx="788.66" cy="776.4" r="2.7" fill="#fff" stroke="#fac858" stroke-width="2.0"/>
<circle cx="865.97" cy="776.4" r="2.7" fill="#fff" stroke="#fac858" stroke-width="2.0"/>
<circle cx="943.28" cy="776.4" r="2.7" fill="#fff" stroke="#fac858" stroke-width="2.0"/>
<circle cx="1020.59" cy="776.4" r="2.7" fill="#fff" stroke="#fac858" stroke-width="2.0"/>
<circle cx="1097.91" cy="776.4" r="2.7" fill="#fff" stroke="#fac858" stroke-width="2.0"/>
<circle cx="1175.22" cy="776.4" r="2.7" fill="#fff" stroke="#fac858" stroke-width="2.0"/>
<circle cx="1252.53" cy="776.4" r="2.7" fill="#fff" stroke="#fac858" stroke-width="2.0"/>
<circle cx="1329.84" cy="776.4" r="2.7" fill="#fff" stroke="#fac858" stroke-width="2.0"/>
<circle cx="1407.16" cy="776.4" r="2.7" fill="#fff" stroke="#fac858" stroke-width="2.0"/>
<circle cx="1484.47" cy="776.4" r="2.7" fill="#fff" stroke="#fac858" stroke-width="2.0"/>
<circle cx="1561.78" cy="776.4" r="2.7" fill="#fff" stroke="#fac858" stroke-width="2.0"/>
<circle cx="1639.09" cy="776.4" r="2.7" fill="#fff" stroke="#fac858" stroke-width="2.0"/>
<circle cx="1716.41" cy="776.4" r="2.7" fill="#fff" stroke="#fac858" stroke-width="2.0"/>
<circle cx="1793.72" cy="776.4" r="2.7" fill="#fff" stroke="#fac858" stroke-width="2.0"/>
<circle cx="1871.03" cy="776.4" r="2.7" fill="#fff" stroke="#fac858" stroke-width="2.0"/>
<circle cx="1948.34" cy="776.4" r="2.7" fill="#fff" stroke="#fac858" stroke-width="2.0"/>
<line x1="788.66" x2="1948.34" y1="670.0" y2="670.0" stroke="#ee6666" stroke-width="2.2"/>
<circle cx="788.66" cy="670.0" r="2.7" fill="#fff" stroke="#ee6666" stroke-width="2.0"/>
<circle cx="865.97" cy="670.0" r="2.7" fill="#fff" stroke="#ee6666" stroke-width="2.0"/>
<circle cx="943.28" cy="670.0" r="2.7" fill="#fff" stroke="#ee6666" stroke-width="2.0"/>
<circle cx="1020.59" cy="670.0" r="2.7" fill="#fff" stroke="#ee6666" stroke-width="2.0"/>
<circle cx="1097.91" cy="670.0" r="2.7" fill="#fff" stroke="#ee6666" stroke-width="2.0"/>
<circle cx="1175.22" cy="670.0" r="2.7" fill="#fff" stroke="#ee6666" stroke-width="2.0"/>
<circle cx="1252.53" cy="670.0" r="2.7" fill="#fff" stroke="#ee6666" stroke-width="2.0"/>
<circle cx="1329.84" cy="670.0" r="2.7" fill="#fff" stroke="#ee6666" stroke-width="2.0"/>
<circle cx="1407.16" cy="670.0" r="2.7" fill="#fff" stroke="#ee6666" stroke-width="2.0"/>
<circle cx="1484.47" cy="670.0" r="2.7" fill="#fff" stroke="#ee6666" stroke-width="2.0"/>
<circle cx="1561.78" cy="670.0" r="2.7" fill="#fff" stroke="#ee6666" stroke-width="2.0"/>
<circle cx="1639.09" cy="670.0" r="2.7" fill="#fff" stroke="#ee6666" stroke-width="2.0"/>
<circle cx="1716.41" cy="670.0" r="2.7" fill="#fff" stroke="#ee6666" stroke-width="2.0"/>
<circle cx="1793.72" cy="670.0" r="2.7" fill="#fff" stroke="#ee6666" stroke-width="2.0"/>
<circle cx="1871.03" cy="670.0" r="2.7" fill="#fff" stroke="#ee6666" stroke-width="2.0"/>
<circle cx="1948.34" cy="670.0" r="2.7" fill="#fff" stroke="#ee6666" stroke-width="2.0"/>
<line x1="788.66" x2="1948.34" y1="694.0" y2="694.0" stroke="#73c0de" stroke-width="2.2"/>
<circle cx="788.66" cy="694.0" r="2.7" fill="#fff" stroke="#73c0de" stroke-width="2.0"/>
<circle cx="865.97" cy="694.0" r="2.7" fill="#fff" stroke="#73c0de" stroke-width="2.0"/>
<circle cx="943.28" cy="694.0" r="2.7" fill="#fff" stroke="#73c0de" stroke-width="2.0"/>
<circle cx="1020.59" cy="694.0" r="2.7" fill="#fff" stroke="#73c0de" stroke-width="2.0"/>
<circle cx="1097.91" cy="694.0" r="2.7" fill="#fff" stroke="#73c0de" stroke-width="2.0"/>
<circle cx="1175.22" cy="694.0" r="2.7" fill="#fff" stroke="#73c0de" stroke-width="2.0"/>
<circle cx="1252.53" cy="694.0" r="2.7" fill="#fff" stroke="#73c0de" stroke-width="2.0"/>
<circle cx="1329.84" cy="694.0" r="2.7" fill="#fff" stroke="#73c0de" stroke-width="2.0"/>
<circle cx="1407.16" cy="694.0" r="2.7" fill="#fff" stroke="#73c0de" stroke-width="2.0"/>
<circle cx="1484.47" cy="694.0" r="2.7" fill="#fff" stroke="#73c0de" stroke-width="2.0"/>
<circle cx="1561.78" cy="694.0" r="2.7" fill="#fff" stroke="#73c0de" stroke-width="2.0"/>
<circle cx="1639.09" cy="694.0" r="2.7" fill="#fff" stroke="#73c0de" stroke-width="2.0"/>
<circle cx="1716.41" cy="694.0" r="2.7" fill="#fff" stroke="#73c0de" stroke-width="2.0"/>
<circle cx="1793.72" cy="694.0" r="2.7" fill="#fff" stroke="#73c0de" stroke-width="2.0"/>
<circle cx="1871.03" cy="694.0" r="2.7" fill="#fff" stroke="#73c0de" stroke-width="2.0"/>
<circle cx="1948.34" cy="694.0" r="2.7" fill="#fff" stroke="#73c0de" stroke-width="2.0"/>
<line x1="788.66" x2="1948.34" y1="606.3" y2="606.3" stroke="#3ba272" stroke-width="2.2"/>
<circle cx="788.66" cy="606.3" r="2.7" fill="#fff" stroke="#3ba272" stroke-width="2.0"/>
<circle cx="865.97" cy="606.3" r="2.7" fill="#fff" stroke="#3ba272" stroke-width="2.0"/>
<circle cx="943.28" cy="606.3" r="2.7" fill="#fff" stroke="#3ba272" stroke-width="2.0"/>
<circle cx="1020.59" cy="606.3" r="2.7" fill="#fff" stroke="#3ba272" stroke-width="2.0"/>
<circle cx="1097.91" cy="606.3" r="2.7" fill="#fff" stroke="#3ba272" stroke-width="2.0"/>
<circle cx="1175.22" cy="606.3" r="2.7" fill="#fff" stroke="#3ba272" stroke-width="2.0"/>
<circle cx="1252.53" cy="606.3" r="2.7" fill="#fff" stroke="#3ba272" stroke-width="2.0"/>
<circle cx="1329.84" cy="606.3" r="2.7" fill="#fff" stroke="#3ba272" stroke-width="2.0"/>
<circle cx="1407.16" cy="606.3" r="2.7" fill="#fff" stroke="#3ba272" stroke-width="2.0"/>
<circle cx="1484.47" cy="606.3" r="2.7" fill="#fff" stroke="#3ba272" stroke-width="2.0"/>
<circle cx="1561.78" cy="606.3" r="2.7" fill="#fff" stroke="#3ba272" stroke-width="2.0"/>
<circle cx="1639.09" cy="606.3" r="2.7" fill="#fff" stroke="#3ba272" stroke-width="2.0"/>
<circle cx="1716.41" cy="606.3" r="2.7" fill="#fff" stroke="#3ba272" stroke-width="2.0"/>
<circle cx="1793.72" cy="606.3" r="2.7" fill="#fff" stroke="#3ba272" stroke-width="2.0"/>
<circle cx="1871.03" cy="606.3" r="2.7" fill="#fff" stroke="#3ba272" stroke-width="2.0"/>
<circle cx="1948.34" cy="606.3" r="2.7" fill="#fff" stroke="#3ba272" stroke-width="2.0"/>
<line x1="1020.90" x2="1053.70" y1="874" y2="874" stroke="#5470c6" stroke-width="2.2"/>
<ellipse cx="1037.30" cy="874" rx="7.3" ry="6.8" fill="#fff" stroke="#5470c6" stroke-width="2.2"/>
<line x1="1139.25" x2="1172.05" y1="874" y2="874" stroke="#91cc75" stroke-width="2.2"/>
<ellipse cx="1155.65" cy="874" rx="7.3" ry="6.8" fill="#fff" stroke="#91cc75" stroke-width="2.2"/>
<line x1="1257.60" x2="1290.40" y1="874" y2="874" stroke="#fac858" stroke-width="2.2"/>
<ellipse cx="1274.00" cy="874" rx="7.3" ry="6.8" fill="#fff" stroke="#fac858" stroke-width="2.2"/>
<line x1="1375.95" x2="1408.75" y1="874" y2="874" stroke="#ee6666" stroke-width="2.2"/>
<ellipse cx="1392.35" cy="874" rx="7.3" ry="6.8" fill="#fff" stroke="#ee6666" stroke-width="2.2"/>
<line x1="1494.30" x2="1527.10" y1="874" y2="874" stroke="#73c0de" stroke-width="2.2"/>
<ellipse cx="1510.70" cy="874" rx="7.3" ry="6.8" fill="#fff" stroke="#73c0de" stroke-width="2.2"/>
<line x1="1612.65" x2="1645.45" y1="874" y2="874" stroke="#3ba272" stroke-width="2.2"/>
<ellipse cx="1629.05" cy="874" rx="7.3" ry="6.8" fill="#fff" stroke="#3ba272" stroke-width="2.2"/>
<g fill="none" stroke="#666" stroke-width="1.4"><path d="M1995.2 1051 H2005.5 L2010 1055.5 V1069.7 H1995.2Z"/><path d="M1998 1057.2 H2002.5 M1998 1060.6 H2007.2 M1998 1063.9 H2007.2 M1998 1067 H2007.2"/></g>
<g fill="none" stroke="#666" stroke-width="1.4"><path d="M2027.5 1063.5 L2031.5 1052 L2034.5 1064.5 L2037.5 1059 L2039.5 1061.5 H2047"/><path d="M2027.5 1069.3 H2047.5"/></g>
<g fill="none" stroke="#666" stroke-width="1.4"><rect x="2066" y="1058.6" width="3" height="8.8"/><rect x="2072" y="1054.5" width="3" height="12.9"/><rect x="2078.5" y="1051" width="3" height="16.4"/><path d="M2064.8 1069.3 H2083.6"/></g>
<g fill="none" stroke="#666" stroke-width="1.4"><path d="M2109.3 1051 V1065 M2102.5 1058.5 L2109.3 1065.3 L2116.1 1058.5"/><path d="M2100.5 1064.5 V1069.3 H2118.1 V1064.5"/></g>
</svg>
<div class="t" style="left:16.18px;top:21.16px;font-weight:bold;color:#ffffff;transform:scale(0.19235,0.15300);z-index:5;-webkit-text-stroke:2.06px #ffffff;">项目</div>
<div class="t" style="left:67.57px;top:19.40px;font-weight:bold;color:#eea43c;transform:scale(0.24191,0.19800);z-index:5;-webkit-text-stroke:1.59px #eea43c;">唛盟云开发平台项目</div>
<div class="t" style="left:347.22px;top:21.48px;font-weight:normal;color:#e3e8ef;transform:scale(0.19577,0.15750);z-index:5;">产品</div>
<div class="t" style="left:449.20px;top:21.27px;font-weight:normal;color:#e3e8ef;transform:scale(0.20000,0.15750);z-index:5;">需求</div>
<div class="t" style="left:552.43px;top:21.25px;font-weight:normal;color:#e3e8ef;transform:scale(0.19072,0.15750);z-index:5;">迭代</div>
<div class="t" style="left:655.50px;top:21.17px;font-weight:normal;color:#e3e8ef;transform:scale(0.18974,0.15750);z-index:5;">任务</div>
<div class="t" style="left:757.81px;top:21.25px;font-weight:normal;color:#e3e8ef;transform:scale(0.19179,0.15750);z-index:5;">测试</div>
<div class="t" style="left:859.80px;top:21.25px;font-weight:normal;color:#e3e8ef;transform:scale(0.19531,0.15750);z-index:5;">缺陷</div>
<div class="t" style="left:961.23px;top:21.17px;font-weight:normal;color:#e3e8ef;transform:scale(0.19683,0.15750);z-index:5;">团队</div>
<div class="t" style="left:1091.02px;top:19.75px;font-weight:normal;color:#e3e8ef;transform:scale(0.19476,0.15750);z-index:5;">财务</div>
<div class="t" style="left:1310.43px;top:19.59px;font-weight:normal;color:#e3e8ef;transform:scale(0.19231,0.15750);z-index:5;">知识</div>
<div class="t" style="left:1427.80px;top:19.77px;font-weight:normal;color:#e3e8ef;transform:scale(0.19946,0.15750);z-index:5;">更多</div>
<div class="t" style="left:1562.82px;top:21.37px;font-weight:normal;color:#e3e8ef;transform:scale(0.18969,0.15750);z-index:5;">首页</div>
<div class="t" style="left:1220.61px;top:20.39px;font-weight:normal;color:#409eff;transform:scale(0.19036,0.15750);z-index:5;">效能</div>
<div class="t" style="left:48.73px;top:90.35px;font-weight:normal;color:#c0c4cc;transform:scale(0.17390,0.13950);z-index:5;">项目级</div>
<div class="t" style="left:169.71px;top:154.98px;font-weight:bold;color:#7b7b7b;transform:scale(0.21453,0.17100);z-index:5;-webkit-text-stroke:1.84px #7b7b7b;">1 项目总结</div>
<div class="t" style="left:170.63px;top:191.13px;font-weight:normal;color:#858585;transform:scale(0.18668,0.14850);z-index:5;-webkit-text-stroke:0.91px #858585;">显示项目总体情况</div>
<div class="t" style="left:170.36px;top:270.56px;font-weight:bold;color:#7b7b7b;transform:scale(0.21269,0.17100);z-index:5;-webkit-text-stroke:1.84px #7b7b7b;">2 项目工作项每日趋势</div>
<div class="t" style="left:170.81px;top:307.47px;font-weight:normal;color:#858585;transform:scale(0.18668,0.14850);z-index:5;-webkit-text-stroke:0.91px #858585;">统计项目每日工作项数量分布情况</div>
<div class="t" style="left:170.57px;top:376.46px;font-weight:bold;color:#7b7b7b;transform:scale(0.21298,0.17100);z-index:5;-webkit-text-stroke:1.84px #7b7b7b;">3 任务每日趋势</div>
<div class="t" style="left:170.44px;top:412.35px;font-weight:normal;color:#858585;transform:scale(0.18668,0.14850);z-index:5;-webkit-text-stroke:0.91px #858585;">跟踪未开始、执行中、已完成、已关闭状态的</div>
<div class="t" style="left:171.00px;top:434.80px;font-weight:normal;color:#858585;transform:scale(0.18584,0.14850);z-index:5;-webkit-text-stroke:0.91px #858585;">任务数量按日期变化趋势，识别任务工作情况</div>
<div class="t" style="left:170.79px;top:488.89px;font-weight:bold;color:#7b7b7b;transform:scale(0.21111,0.17100);z-index:5;-webkit-text-stroke:1.84px #7b7b7b;">4 任务每日累积</div>
<div class="t" style="left:170.44px;top:525.15px;font-weight:normal;color:#858585;transform:scale(0.18668,0.14850);z-index:5;-webkit-text-stroke:0.91px #858585;">跟踪未开始、执行中、已完成、已关闭状态的</div>
<div class="t" style="left:171.00px;top:546.95px;font-weight:normal;color:#858585;transform:scale(0.18593,0.14850);z-index:5;-webkit-text-stroke:0.91px #858585;">任务数量按日期累积情况，识别任务工作的瓶</div>
<div class="t" style="left:170.81px;top:568.76px;font-weight:normal;color:#858585;transform:scale(0.18668,0.14850);z-index:5;-webkit-text-stroke:0.91px #858585;">颈</div>
<div class="t" style="left:170.36px;top:623.88px;font-weight:bold;color:#7b7b7b;transform:scale(0.21298,0.17100);z-index:5;-webkit-text-stroke:1.84px #7b7b7b;">5 任务属性分布</div>
<div class="t" style="left:170.81px;top:660.05px;font-weight:normal;color:#858585;transform:scale(0.18602,0.14850);z-index:5;-webkit-text-stroke:0.91px #858585;">统计所有任务任意属性数量分布情况（实时数</div>
<div class="t" style="left:170.81px;top:681.76px;font-weight:normal;color:#858585;transform:scale(0.18668,0.14850);z-index:5;-webkit-text-stroke:0.91px #858585;">据）</div>
<div class="t" style="left:170.15px;top:750.69px;font-weight:bold;color:#7b7b7b;transform:scale(0.21270,0.17100);z-index:5;-webkit-text-stroke:1.84px #7b7b7b;">6 任务年龄分布</div>
<div class="t" style="left:170.81px;top:787.45px;font-weight:normal;color:#858585;transform:scale(0.18668,0.14850);z-index:5;-webkit-text-stroke:0.91px #858585;">统计所有任务年龄分布情况（实时数据）</div>
<div class="t" style="left:170.15px;top:856.75px;font-weight:bold;color:#7b7b7b;transform:scale(0.21317,0.17100);z-index:5;-webkit-text-stroke:1.84px #7b7b7b;">7 任务排行榜</div>
<div class="t" style="left:171.00px;top:892.48px;font-weight:normal;color:#858585;transform:scale(0.18602,0.14850);z-index:5;-webkit-text-stroke:0.91px #858585;">任务提出人、负责人的用户故事数量排行（实</div>
<div class="t" style="left:169.69px;top:914.90px;font-weight:normal;color:#858585;transform:scale(0.18668,0.14850);z-index:5;-webkit-text-stroke:0.91px #858585;">时数据）</div>
<div class="t" style="left:170.36px;top:972.86px;font-weight:bold;color:#7b7b7b;transform:scale(0.21281,0.17100);z-index:5;-webkit-text-stroke:1.84px #7b7b7b;">8 项目结算工时每日趋势</div>
<div class="t" style="left:170.81px;top:1008.38px;font-weight:normal;color:#858585;transform:scale(0.18602,0.14850);z-index:5;-webkit-text-stroke:0.91px #858585;">统计项目每日登记工时、结算工时数量分布情</div>
<div class="t" style="left:170.25px;top:1031.03px;font-weight:normal;color:#858585;transform:scale(0.18668,0.14850);z-index:5;-webkit-text-stroke:0.91px #858585;">况</div>
<div class="t" style="left:595.98px;top:91.20px;font-weight:bold;color:#000;transform:scale(0.23848,0.19800);z-index:5;-webkit-text-stroke:1.59px #000;">唛盟云开发平台项目-报告</div>
<div class="t" style="left:1860.04px;top:102.41px;font-weight:normal;color:#4a9af0;transform:scale(0.15949,0.13050);z-index:5;">制作报告</div>
<div class="t" style="left:1967.18px;top:102.41px;font-weight:normal;color:#4a9af0;transform:scale(0.16041,0.13050);z-index:5;">查看报告</div>
<div class="t" style="left:2051.19px;top:102.67px;font-weight:normal;color:#4a9af0;transform:scale(0.16216,0.13050);z-index:5;">隐藏过滤条件</div>
<div class="t" style="left:2205.45px;top:100.66px;font-weight:normal;color:#4a9af0;transform:scale(0.19098,0.16000);z-index:5;">pdf</div>
<div class="t" style="left:1105.98px;top:246.30px;font-weight:bold;color:#464646;transform:scale(0.23900,0.19800);z-index:5;-webkit-text-stroke:1.59px #464646;">项目【唛盟云开发平台项目】项目工作项每日分布</div>
<div class="t" style="left:1422.98px;top:315.28px;font-weight:normal;color:#505050;transform:scale(0.16114,0.13500);z-index:5;">未关故事: 未关故事 (7.12%)</div>
<div class="t" style="left:1479.55px;top:341.88px;font-weight:normal;color:#505050;transform:scale(0.16092,0.13500);z-index:5;">已关故事: 已关故事 (9.16%)</div>
<div class="t" style="left:1511.08px;top:382.78px;font-weight:normal;color:#505050;transform:scale(0.16049,0.13500);z-index:5;">未关任务: 未关任务 (4.81%)</div>
<div class="t" style="left:1504.44px;top:482.48px;font-weight:normal;color:#505050;transform:scale(0.16170,0.13500);z-index:5;">已关任务: 已关任务 (23.96%)</div>
<div class="t" style="left:1096.68px;top:536.28px;font-weight:normal;color:#505050;transform:scale(0.16097,0.13500);z-index:5;">未关缺陷: 未关缺陷 (19.61%)</div>
<div class="t" style="left:1021.04px;top:375.28px;font-weight:normal;color:#505050;transform:scale(0.16185,0.13500);z-index:5;">已关缺陷: 已关缺陷 (35.34%)</div>
<div class="t" style="left:711.71px;top:587.87px;font-weight:normal;color:#84868e;transform:scale(0.16740,0.15500);z-index:5;">400</div>
<div class="t" style="left:711.71px;top:639.37px;font-weight:normal;color:#84868e;transform:scale(0.16740,0.15500);z-index:5;">300</div>
<div class="t" style="left:711.71px;top:690.87px;font-weight:normal;color:#84868e;transform:scale(0.16740,0.15500);z-index:5;">200</div>
<div class="t" style="left:711.71px;top:742.37px;font-weight:normal;color:#84868e;transform:scale(0.16740,0.15500);z-index:5;">100</div>
<div class="t" style="left:730.30px;top:794.37px;font-weight:normal;color:#84868e;transform:scale(0.16740,0.15500);z-index:5;">0</div>
<div class="t" style="left:744.83px;top:809.62px;font-weight:normal;color:#84868e;transform:scale(0.17280,0.16000);z-index:5;">2023-08-20</div>
<div class="t" style="left:899.54px;top:809.62px;font-weight:normal;color:#84868e;transform:scale(0.17280,0.16000);z-index:5;">2023-08-22</div>
<div class="t" style="left:1054.00px;top:809.62px;font-weight:normal;color:#84868e;transform:scale(0.17280,0.16000);z-index:5;">2023-08-24</div>
<div class="t" style="left:1208.79px;top:809.62px;font-weight:normal;color:#84868e;transform:scale(0.17280,0.16000);z-index:5;">2023-08-26</div>
<div class="t" style="left:1363.42px;top:809.62px;font-weight:normal;color:#84868e;transform:scale(0.17280,0.16000);z-index:5;">2023-08-28</div>
<div class="t" style="left:1517.96px;top:809.62px;font-weight:normal;color:#84868e;transform:scale(0.17280,0.16000);z-index:5;">2023-08-30</div>
<div class="t" style="left:1672.67px;top:809.62px;font-weight:normal;color:#84868e;transform:scale(0.17280,0.16000);z-index:5;">2023-09-01</div>
<div class="t" style="left:1827.29px;top:809.62px;font-weight:normal;color:#84868e;transform:scale(0.17280,0.16000);z-index:5;">2023-09-03</div>
<div class="t" style="left:1061.08px;top:866.45px;font-weight:normal;color:#4a4a4a;transform:scale(0.16244,0.13500);z-index:5;">未关故事</div>
<div class="t" style="left:1178.26px;top:866.45px;font-weight:normal;color:#4a4a4a;transform:scale(0.16537,0.13500);z-index:5;">已关故事</div>
<div class="t" style="left:1297.77px;top:866.52px;font-weight:normal;color:#4a4a4a;transform:scale(0.16285,0.13500);z-index:5;">未关任务</div>
<div class="t" style="left:1414.96px;top:866.52px;font-weight:normal;color:#4a4a4a;transform:scale(0.16580,0.13500);z-index:5;">已关任务</div>
<div class="t" style="left:1534.47px;top:866.52px;font-weight:normal;color:#4a4a4a;transform:scale(0.16368,0.13500);z-index:5;">未关缺陷</div>
<div class="t" style="left:1651.65px;top:866.52px;font-weight:normal;color:#4a4a4a;transform:scale(0.16667,0.13500);z-index:5;">已关缺陷</div>
<div class="t" style="left:1141.48px;top:1015.50px;font-weight:bold;color:#464646;transform:scale(0.23895,0.19800);z-index:5;-webkit-text-stroke:1.59px #464646;">项目【唛盟云开发平台项目】任务每日分布</div>
<div class="t" style="left:711.71px;top:1072.47px;font-weight:normal;color:#84868e;transform:scale(0.16740,0.15500);z-index:2;">300</div>
</body></html>
